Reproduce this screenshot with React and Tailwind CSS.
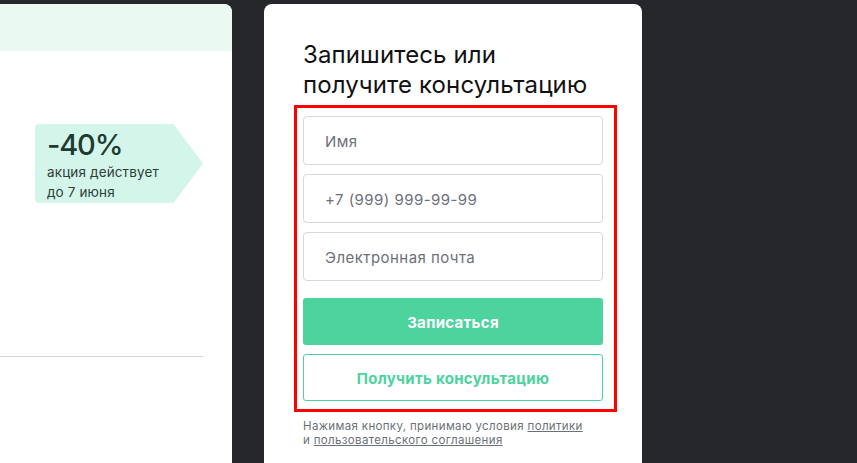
export default function App() {
  return (
    <div
      className="relative flex h-[463px] w-[857px] gap-8 overflow-hidden bg-[#26272b] pt-1"
      style={{ fontFamily: 'Inter, "Noto Sans", sans-serif' }}
    >
      {/* left card */}
      <div className="flex w-[232px] flex-col overflow-hidden rounded-tr-lg bg-white">
        <div className="h-[47px] bg-[#ebf9f3]" />
        <div className="ml-[35px] mt-[73px] flex h-[79px]">
          <div className="w-[138px] rounded-l bg-[#d4f5ea] pl-[12px] pt-[4px]">
            <div className="text-[29px] font-medium leading-[34px] tracking-[-0.04em] text-[#1d3b30]">-40%</div>
            <div className="mt-0 text-[13.5px] leading-[20px] tracking-[0.01em] text-[#2d3e38]">
              акция действует
              <br />
              до 7 июня
            </div>
          </div>
          <svg width="30" height="79" viewBox="0 0 30 79" className="block">
            <polygon points="0,0 0.5,0 30,39.5 0.5,79 0,79" fill="#d4f5ea" />
          </svg>
        </div>
        <div className="mt-[153px] h-px w-[203px] bg-[#d1d5db]" />
      </div>

      {/* right card */}
      <div className="flex w-[378px] flex-col rounded-t-lg bg-white px-[39px] pt-[36px]">
        <h2 className="text-[24px] font-normal leading-[30px] tracking-[0.005em] text-[#111]">
          Запишитесь или
          <br />
          получите консультацию
        </h2>
        <div className="mt-[16px] flex flex-col gap-[9px]">
          {['Имя', '+7 (999) 999-99-99', 'Электронная почта'].map((p) => (
            <input
              key={p}
              placeholder={p}
              className="h-[49px] w-[300px] rounded border border-[#d5d8dc] px-[21px] pt-[2px] text-[15px] tracking-[0.03em] text-[#111] outline-none placeholder:text-[#6b7079]"
            />
          ))}
        </div>
        <button className="mt-[17px] h-[47px] w-[300px] rounded-[3px] bg-[#4cd39e] pt-[3px] text-[15px] font-bold tracking-[0.02em] text-white">
          Записаться
        </button>
        <button className="mt-[9px] h-[47px] w-[300px] rounded-[3px] border border-[#4cd39e] pt-[3px] text-[15px] font-bold tracking-[0.02em] text-[#4cd39e]">
          Получить консультацию
        </button>
        <p className="mt-[18px] text-[11.5px] leading-[14px] tracking-[0.03em] text-[#6b7079]">
          Нажимая кнопку, принимаю условия <span className="underline">политики</span>
          <br />
          и <span className="underline">пользовательского соглашения</span>
        </p>
      </div>

      {/* annotation box */}
      <div className="pointer-events-none absolute left-[294px] top-[105px] h-[307px] w-[323px] border-[3px] border-[#ff0000]" />
    </div>
  );
}
